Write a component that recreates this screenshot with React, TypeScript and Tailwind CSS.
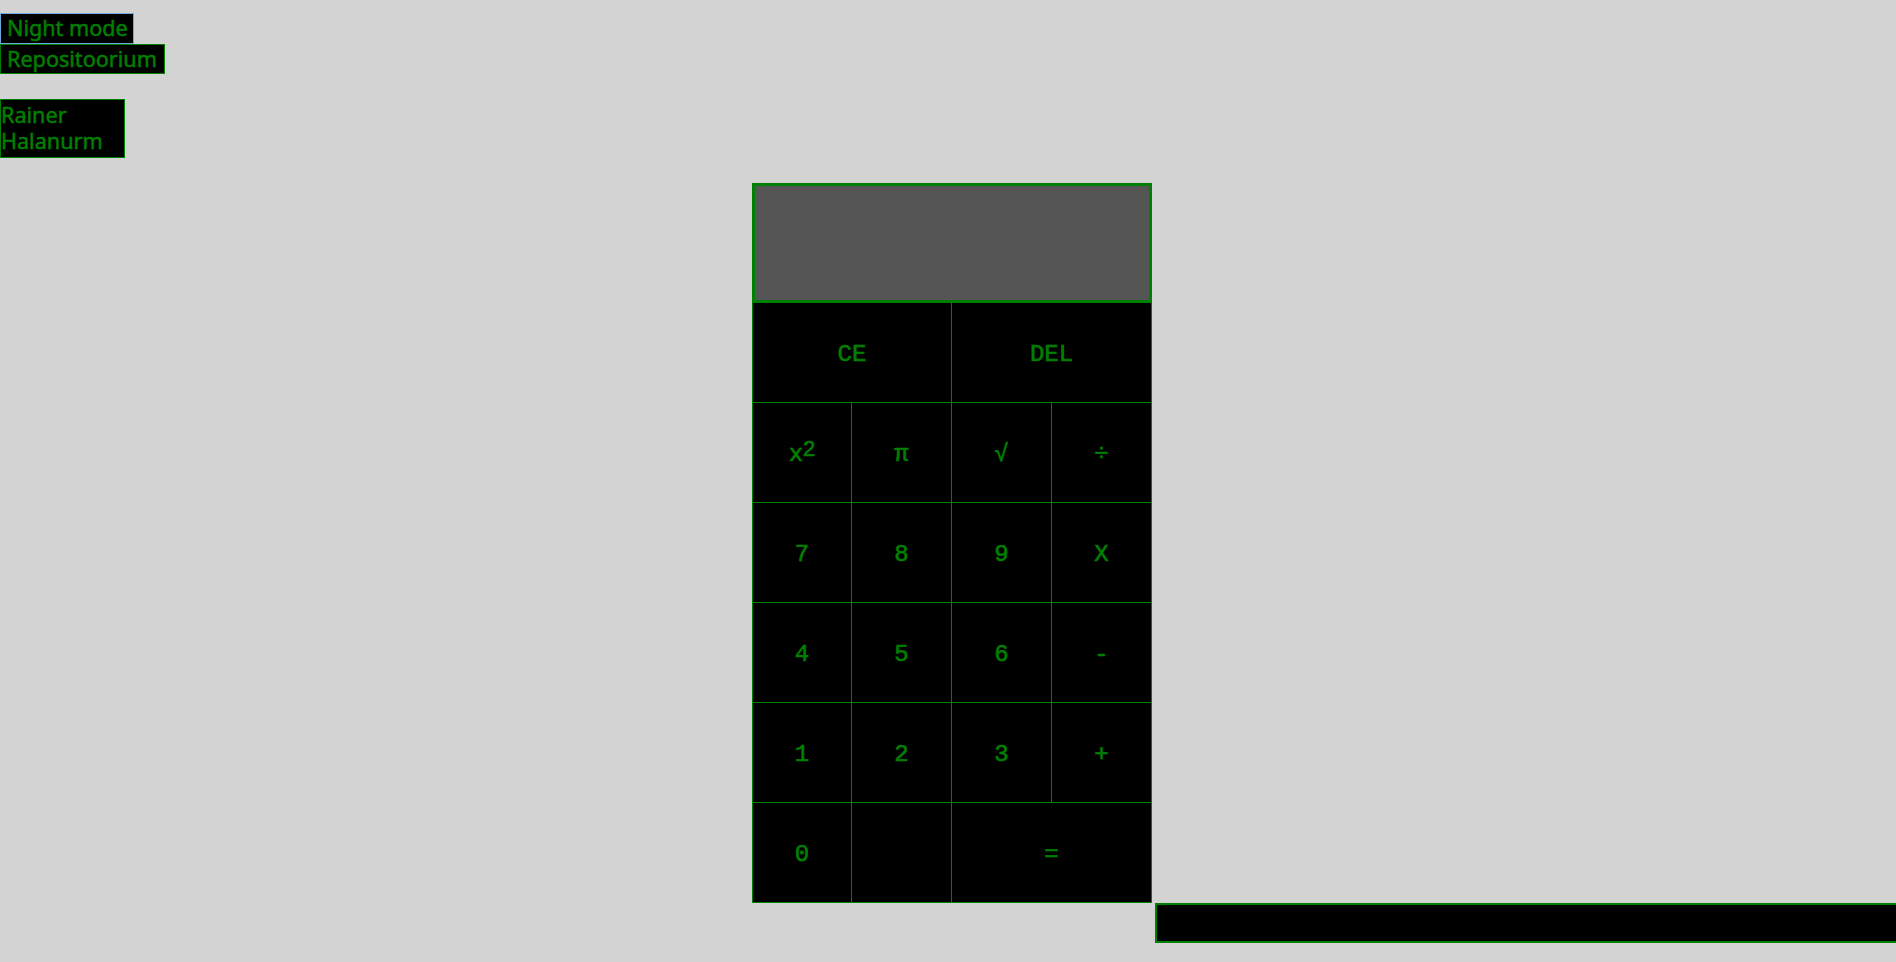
import React from 'react'

const mono = "font-['Liberation_Mono',monospace]"

type Key = { label: React.ReactNode; span?: boolean; first?: boolean }

const rows: Key[][] = [
  [
    { label: 'CE', span: true, first: true },
    { label: 'DEL', span: true },
  ],
  [
    { label: (<span>x<sup className="relative -top-[5px] text-[22px] font-['Liberation_Sans',sans-serif]">2</sup></span>), first: true },
    { label: 'π' },
    { label: '√' },
    { label: '÷' },
  ],
  [{ label: '7', first: true }, { label: '8' }, { label: '9' }, { label: 'X' }],
  [{ label: '4', first: true }, { label: '5' }, { label: '6' }, { label: '-' }],
  [{ label: '1', first: true }, { label: '2' }, { label: '3' }, { label: '+' }],
  [{ label: '0', first: true }, { label: '' }, { label: '=', span: true }],
]

function CalcKey({ k }: { k: Key }) {
  return (
    <button
      className={`${k.span ? 'col-span-2' : ''} ${k.first ? 'border-l' : ''} h-[100px] border-r border-b border-[#008000] bg-black pt-[5px] text-[#008000] text-[24px] leading-none [-webkit-text-stroke:0.6px_#008000] flex items-center justify-center ${mono}`}
    >
      {k.label}
    </button>
  )
}

// slightly heavier than regular, the original font sits between regular and semibold
const heavy = 'text-[21.6px] [-webkit-text-stroke:0.5px_#008000]'

export default function App() {
  return (
    <div className="h-screen w-full overflow-hidden bg-[#d3d3d3] text-[#008000] font-['Noto_Sans',sans-serif]">
      {/* top links */}
      <button className={`mt-[13px] flex h-[31px] w-[134px] items-center border border-[#70a8e0] bg-black pl-[6px] ${heavy}`}>
        Night mode
      </button>
      <button className={`flex h-[30px] w-[165px] items-center border border-[#008000] bg-black pl-[6px] ${heavy}`}>
        Repositoorium
      </button>

      <div className={`mt-[25px] h-[59px] w-[125px] border border-[#008000] bg-black pt-[2px] leading-[26px] ${heavy}`}>
        Rainer Halanurm
      </div>

      {/* calculator */}
      <div className="ml-[752px] mt-[25px] w-[400px]">
        <div className="h-[120px] border-[3px] border-[#008000] bg-[#555555]" />
        <div className="grid grid-cols-4">
          {rows.map((row, i) => (
            <React.Fragment key={i}>
              {row.map((k, j) => (
                <CalcKey key={j} k={k} />
              ))}
            </React.Fragment>
          ))}
        </div>
      </div>

      <div className="ml-[1155px] h-[40px] w-[800px] border-2 border-[#008000] bg-black" />
    </div>
  )
}
